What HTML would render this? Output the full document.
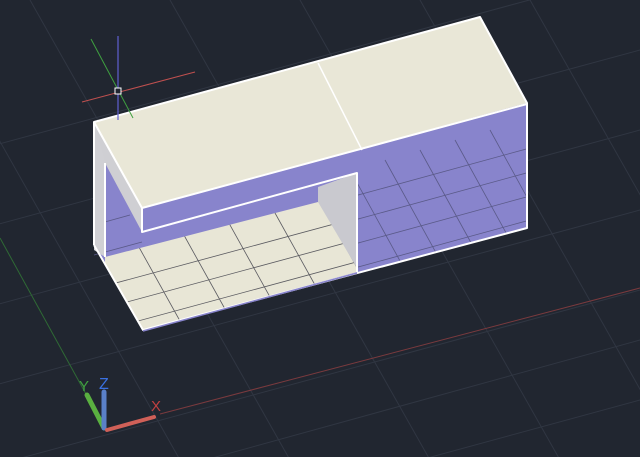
<!DOCTYPE html>
<html><head><style>
html,body{margin:0;padding:0;background:#212630;overflow:hidden;width:640px;height:457px;}
svg{display:block;}
</style></head><body>
<svg width="640" height="457" viewBox="0 0 640 457" xmlns="http://www.w3.org/2000/svg">
<rect width="640" height="457" fill="#212630"/>
<g stroke="#303642" stroke-width="1">
<line x1="-60" y1="160" x2="640" y2="-30"/>
<line x1="-60" y1="240" x2="640" y2="50"/>
<line x1="-60" y1="320" x2="640" y2="130"/>
<line x1="-60" y1="400" x2="640" y2="210"/>
<line x1="-60" y1="480" x2="640" y2="290"/>
<line x1="60" y1="500" x2="640" y2="340"/>
<line x1="200" y1="520" x2="640" y2="400"/>
<line x1="30" y1="0" x2="290" y2="460"/>
<line x1="170" y1="0" x2="430" y2="460"/>
<line x1="300" y1="0" x2="560" y2="460"/>
<line x1="420" y1="0" x2="680" y2="460"/>
<line x1="530" y1="0" x2="790" y2="460"/>
<line x1="-80" y1="0" x2="180" y2="460"/>
</g>
<line x1="160" y1="414" x2="640" y2="288" stroke="#7a3a3e" stroke-width="1"/>
<line x1="0" y1="238" x2="103" y2="425" stroke="#2f6a35" stroke-width="1"/>
<polygon points="94,122 480,17 527,103 527,228 143,330 94,245" fill="#8884cc"/>
<polygon points="105,257 318,202 357,205 357,272 143,330 105,265" fill="#e8e6d6"/>
<clipPath id="fl"><polygon points="105,257 318,202 357,200 357,272 143,330 94,245"/></clipPath>
<g clip-path="url(#fl)" stroke="#5a5a60" stroke-width="0.8">
<line x1="90" y1="290" x2="360" y2="217"/>
<line x1="90" y1="312" x2="360" y2="239"/>
<line x1="90" y1="334" x2="360" y2="261"/>
<line x1="135" y1="240" x2="185" y2="330"/>
<line x1="180" y1="228" x2="230" y2="318"/>
<line x1="225" y1="216" x2="275" y2="306"/>
<line x1="270" y1="204" x2="320" y2="294"/>
<line x1="315" y1="192" x2="365" y2="282"/>
</g>
<clipPath id="rf"><polygon points="357,150 527,104 527,228 357,272"/></clipPath>
<g clip-path="url(#rf)" stroke="#5a5a88" stroke-width="0.8">
<line x1="340" y1="200" x2="530" y2="148"/>
<line x1="340" y1="224" x2="530" y2="172"/>
<line x1="340" y1="248" x2="530" y2="196"/>
<line x1="340" y1="272" x2="530" y2="220"/>
<line x1="385" y1="160" x2="440" y2="260"/>
<line x1="420" y1="150" x2="475" y2="250"/>
<line x1="455" y1="140" x2="510" y2="240"/>
<line x1="490" y1="130" x2="545" y2="230"/>
<line x1="350" y1="170" x2="405" y2="270"/>
</g>
<g stroke="#5a5a88" stroke-width="0.8">
<line x1="94" y1="255" x2="142" y2="242"/>
<line x1="94" y1="225" x2="130" y2="215"/>
</g>
<polygon points="318,187 357,173 357,268 318,202" fill="#c9c9cf"/>
<polygon points="94,122 105,135 105,257 94,250" fill="#d0d0d4"/>
<polygon points="94,122 142,208 142,232 105,163" fill="#cfcfd3"/>
<polygon points="94,122 480,17 527,103 142,208" fill="#e9e7d7"/>
<g stroke="#ffffff" stroke-width="2" fill="none" stroke-linejoin="round">
<polyline points="94,245 94,122 480,17 527,103 527,228 143,330 94,245"/>
<line x1="142" y1="208" x2="527" y2="104"/>
<line x1="94" y1="122" x2="142" y2="208"/>
<polyline points="142,208 142,232 357,173 357,272"/>
<line x1="105" y1="163" x2="105" y2="257"/>
<line x1="318" y1="63" x2="362" y2="150" stroke-width="1.5"/>
</g>
<line x1="143" y1="331" x2="357" y2="273" stroke="#8884cc" stroke-width="1.5"/>
<line x1="118" y1="36" x2="118" y2="120" stroke="#5f5fd0" stroke-width="1.2"/>
<line x1="82" y1="102" x2="195" y2="72" stroke="#c0504f" stroke-width="1"/>
<line x1="91" y1="39" x2="133" y2="118" stroke="#3fa040" stroke-width="1"/>
<rect x="115" y="88" width="6" height="6" fill="#212630" stroke="#ffffff" stroke-width="1"/>
<line x1="104" y1="428" x2="87" y2="395" stroke="#5ab040" stroke-width="5" stroke-linecap="round"/>
<line x1="104" y1="428" x2="104" y2="392" stroke="#5a80c8" stroke-width="5" stroke-linecap="round"/>
<line x1="107" y1="430" x2="154" y2="417" stroke="#d06058" stroke-width="4" stroke-linecap="round"/>
<text x="79" y="391" font-family="Liberation Sans, sans-serif" font-size="15" fill="#40a040">Y</text>
<text x="99" y="389" font-family="Liberation Sans, sans-serif" font-size="16" fill="#3a70e0">Z</text>
<text x="151" y="411" font-family="Liberation Sans, sans-serif" font-size="15" fill="#c04040">X</text>
</svg>
</body></html>
